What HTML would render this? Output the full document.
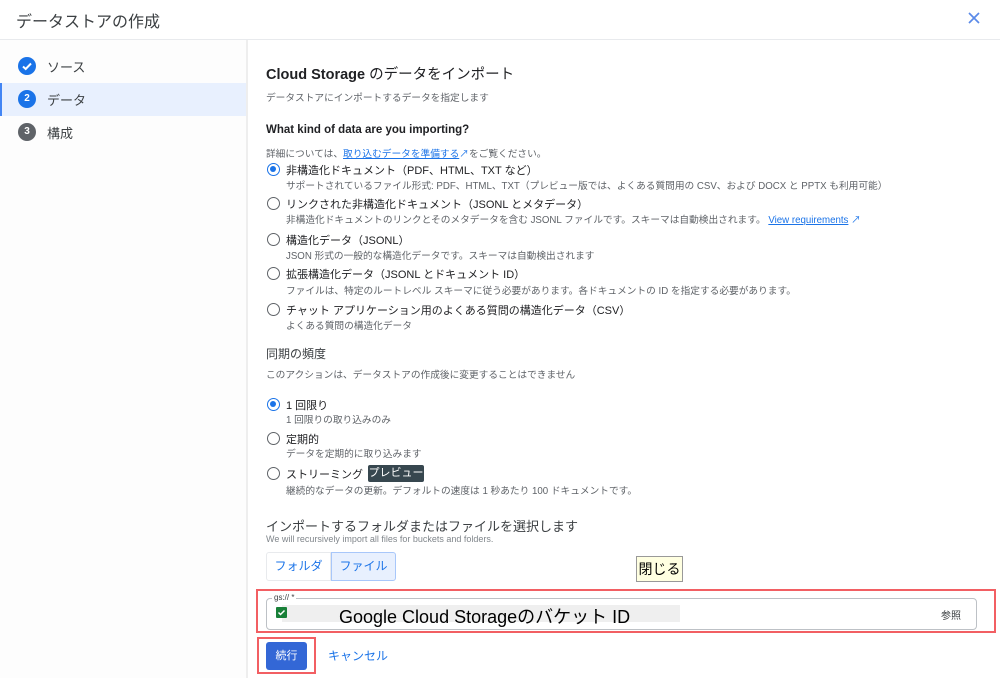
<!DOCTYPE html>
<html><head><meta charset="utf-8"><style>
*{margin:0;padding:0;box-sizing:border-box}
body{width:1000px;height:678px;overflow:hidden;background:#fff;position:relative;font-family:"Liberation Sans","Noto Sans CJK JP",sans-serif;color:#202124}
.a{position:absolute;white-space:nowrap}
.t{font-size:11px;color:#202124}
.d{font-size:9.7px;color:#5f6368}
.r{position:absolute;width:13px;height:13px;border:1.5px solid #5f6368;border-radius:50%}
.r.on{border-color:#1a73e8}
.r.on:after{content:"";position:absolute;left:2px;top:2px;width:6px;height:6px;border-radius:50%;background:#1a73e8}
.c{position:absolute;width:18px;height:18px;border-radius:50%;color:#fff;font-size:10px;font-weight:bold;text-align:center;line-height:18px}
</style></head><body>
<div class="a" style="left:16px;top:8px;font-size:16px;color:#3c4043">データストアの作成</div>
<svg class="a" style="left:968px;top:12px" width="12" height="12" viewBox="0 0 12 12"><path d="M1 1L11 11M11 1L1 11" stroke="#5a8ae8" stroke-width="1.7"/></svg>
<div class="a" style="left:0;top:39px;width:1000px;height:1px;background:#e8eaed"></div>
<div class="a" style="left:246px;top:40px;width:2px;height:638px;background:#eeeeee"></div>
<div class="a" style="left:0;top:40px;width:246px;height:638px;background:#fdfdfd"></div>
<div class="a" style="left:0;top:83px;width:246px;height:33px;background:#e8f0fe"></div>
<div class="a" style="left:0;top:83px;width:2px;height:33px;background:#4285f4"></div>
<div class="c" style="left:18px;top:57px;background:#1a73e8"><svg width="18" height="18" viewBox="0 0 18 18"><path d="M5 9.5l2.7 2.5L13 6.5" stroke="#fff" stroke-width="2" fill="none"/></svg></div>
<div class="a" style="left:47px;top:57px;font-size:13px;color:#3c4043">ソース</div>
<div class="c" style="left:18px;top:90px;background:#1a73e8">2</div>
<div class="a" style="left:47px;top:90px;font-size:13px;color:#3c4043">データ</div>
<div class="c" style="left:18px;top:123px;background:#5f6368">3</div>
<div class="a" style="left:47px;top:123px;font-size:13px;color:#3c4043">構成</div>

<div class="a" style="left:266px;top:63px;font-size:14.5px"><b style="font-weight:600">Cloud Storage</b> のデータをインポート</div>
<div class="a d" style="left:266px;top:90px">データストアにインポートするデータを指定します</div>
<div class="a" style="left:266px;top:124px;font-size:11.5px;font-weight:bold">What kind of data are you importing?</div>
<div class="a d" style="left:266px;top:146px">詳細については、<span style="color:#1a73e8;text-decoration:underline">取り込むデータを準備する</span><span style="color:#1a73e8">↗</span>をご覧ください。</div>

<div class="r on" style="left:267px;top:163px"></div>
<div class="a t" style="left:286px;top:162px">非構造化ドキュメント（PDF、HTML、TXT など）</div>
<div class="a d" style="left:286px;top:178px">サポートされているファイル形式: PDF、HTML、TXT（プレビュー版では、よくある質問用の CSV、および DOCX と PPTX も利用可能）</div>
<div class="r" style="left:267px;top:197px"></div>
<div class="a t" style="left:286px;top:196px">リンクされた非構造化ドキュメント（JSONL とメタデータ）</div>
<div class="a d" style="left:286px;top:212px">非構造化ドキュメントのリンクとそのメタデータを含む JSONL ファイルです。スキーマは自動検出されます。 <span style="color:#1a73e8;text-decoration:underline">View requirements</span><span style="color:#1a73e8"> ↗</span></div>
<div class="r" style="left:267px;top:233px"></div>
<div class="a t" style="left:286px;top:232px">構造化データ（JSONL）</div>
<div class="a d" style="left:286px;top:248px">JSON 形式の一般的な構造化データです。スキーマは自動検出されます</div>
<div class="r" style="left:267px;top:267px"></div>
<div class="a t" style="left:286px;top:266px">拡張構造化データ（JSONL とドキュメント ID）</div>
<div class="a d" style="left:286px;top:283px">ファイルは、特定のルートレベル スキーマに従う必要があります。各ドキュメントの ID を指定する必要があります。</div>
<div class="r" style="left:267px;top:303px"></div>
<div class="a t" style="left:286px;top:302px">チャット アプリケーション用のよくある質問の構造化データ（CSV）</div>
<div class="a d" style="left:286px;top:318px">よくある質問の構造化データ</div>

<div class="a" style="left:266px;top:345px;font-size:12px;color:#3c4043">同期の頻度</div>
<div class="a d" style="left:266px;top:367px">このアクションは、データストアの作成後に変更することはできません</div>
<div class="r on" style="left:267px;top:398px"></div>
<div class="a t" style="left:286px;top:397px">1 回限り</div>
<div class="a d" style="left:286px;top:412px">1 回限りの取り込みのみ</div>
<div class="r" style="left:267px;top:432px"></div>
<div class="a t" style="left:286px;top:431px">定期的</div>
<div class="a d" style="left:286px;top:446px">データを定期的に取り込みます</div>
<div class="r" style="left:267px;top:467px"></div>
<div class="a t" style="left:286px;top:466px">ストリーミング</div>
<div class="a" style="left:368px;top:465px;width:56px;height:17px;background:#37474f;color:#fff;font-size:11px;line-height:17px;text-align:center;border-radius:2px">プレビュー</div>
<div class="a d" style="left:286px;top:483px">継続的なデータの更新。デフォルトの速度は 1 秒あたり 100 ドキュメントです。</div>

<div class="a" style="left:266px;top:516px;font-size:13px;color:#3c4043">インポートするフォルダまたはファイルを選択します</div>
<div class="a" style="left:266px;top:534px;font-size:9px;color:#80868b">We will recursively import all files for buckets and folders.</div>
<div class="a" style="left:266px;top:552px;width:65px;height:29px;border:1px solid #e8eaed;border-radius:3px 0 0 3px;color:#1a73e8;font-size:12px;line-height:27px;text-align:center">フォルダ</div>
<div class="a" style="left:331px;top:552px;width:65px;height:29px;border:1px solid #a8c7fa;background:#e8f0fe;border-radius:0 3px 3px 0;color:#1a73e8;font-size:12px;line-height:27px;text-align:center">ファイル</div>
<div class="a" style="left:636px;top:556px;width:47px;height:26px;border:1px solid #999;background:#ffffe1;font-size:14px;line-height:24px;text-align:center;color:#000">閉じる</div>

<div class="a" style="left:256px;top:589px;width:740px;height:44px;border:2px solid #f25f63"></div>
<div class="a" style="left:266px;top:598px;width:711px;height:32px;border:1px solid #bdc1c6;border-radius:4px"></div>
<div class="a" style="left:272px;top:593px;font-size:8px;color:#3c4043;background:#fff;padding:0 2px">gs:// *</div>
<div class="a" style="left:282px;top:605px;width:398px;height:17px;background:#efefef"></div>
<div class="a" style="left:276px;top:607px;width:11px;height:11px;background:#188038;border-radius:1px"><svg width="11" height="11" viewBox="0 0 11 11" style="display:block"><path d="M2.5 5.5l2 2L8.5 3.5" stroke="#fff" stroke-width="1.5" fill="none"/></svg></div>
<div class="a" style="left:339px;top:603px;font-size:18px;color:#000">Google Cloud Storageのバケット ID</div>
<div class="a" style="left:941px;top:607px;font-size:10px;color:#3c4043">参照</div>

<div class="a" style="left:257px;top:637px;width:59px;height:37px;border:2px solid #f25f63"></div>
<div class="a" style="left:266px;top:642px;width:41px;height:28px;background:#3367d6;border-radius:3px;color:#fff;font-size:11px;line-height:28px;text-align:center">続行</div>
<div class="a" style="left:328px;top:647px;font-size:12px;color:#1a73e8">キャンセル</div>
</body></html>
